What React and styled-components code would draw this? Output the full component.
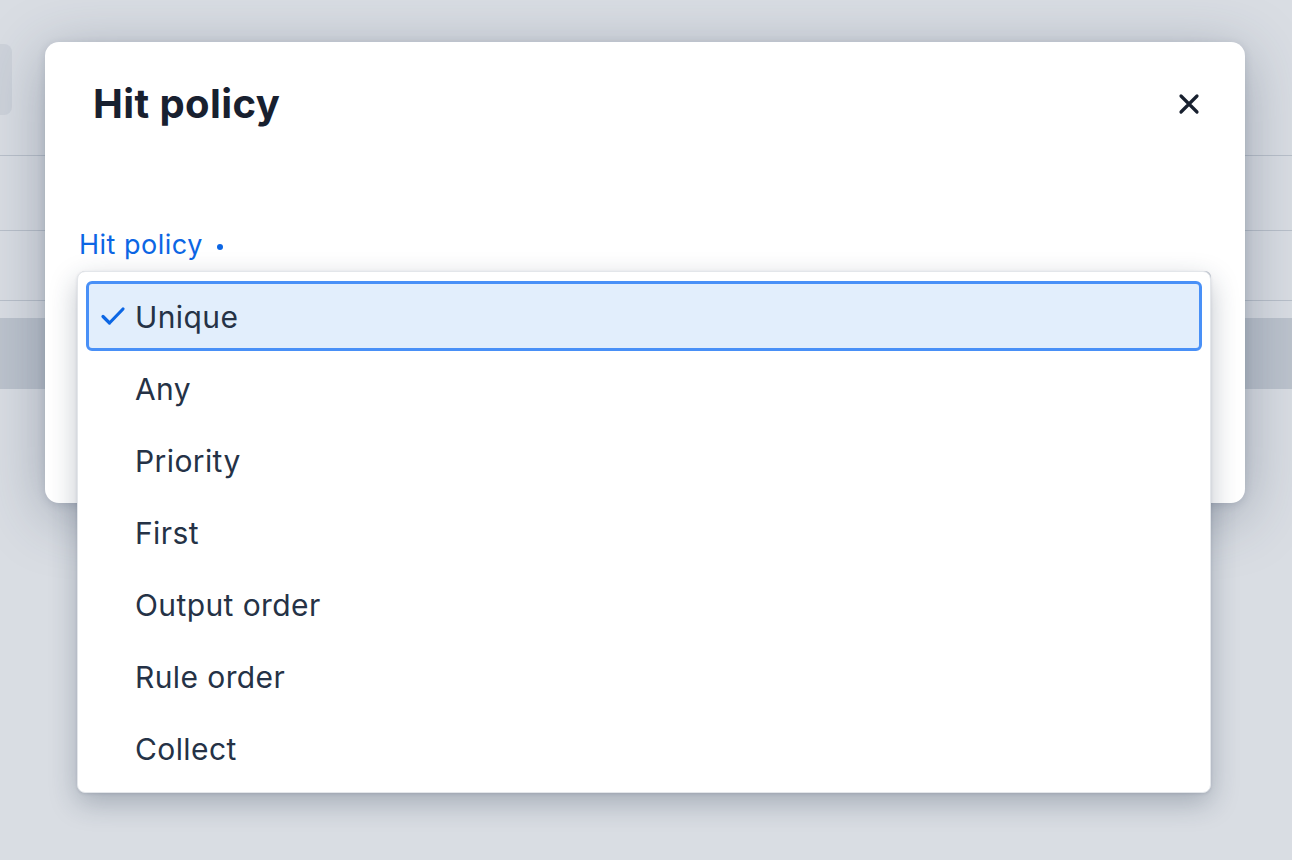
import React from 'react';
import styled, { createGlobalStyle } from 'styled-components';

const GlobalStyle = createGlobalStyle`
  html, body {
    margin: 0;
    padding: 0;
    height: 100%;
  }
  body {
    font-family: 'Inter', 'Noto Sans', sans-serif;
    background: #d9dde3;
    overflow: hidden;
  }
`;

const Page = styled.div`
  position: relative;
  width: 100vw;
  height: 100vh;
  overflow: hidden;
`;

// the app behind the modal, dimmed
const Backdrop = styled.div`
  display: flex;
  flex-direction: column;
  height: 100%;
  background: #d9dde3;
`;

const TopBar = styled.div`
  height: 156px;
  box-sizing: border-box;
  padding-top: 44px;
  border-bottom: 1px solid #b9c0ca;
`;

const GhostButton = styled.div`
  width: 12px;
  height: 71px;
  border-radius: 0 8px 8px 0;
  background: #cdd2da;
`;

const TableRow = styled.div`
  height: ${(p) => p.h}px;
  box-sizing: border-box;
  border-bottom: ${(p) => (p.line ? '1px solid #b9c0ca' : 'none')};
  background: ${(p) => (p.shade ? '#bcc3cd' : 'transparent')};
`;

const Overlay = styled.div`
  position: absolute;
  inset: 0;
  padding: 42px 47px 0 45px;
`;

const Modal = styled.div`
  width: 1200px;
  height: 461px;
  box-sizing: border-box;
  background: #ffffff;
  border-radius: 14px;
  box-shadow: 0 12px 60px rgba(45, 60, 85, 0.35), 0 2px 8px rgba(45, 60, 85, 0.15);
  display: flex;
  flex-direction: column;
`;

const Header = styled.div`
  display: flex;
  align-items: center;
  justify-content: space-between;
  padding: 38px 41px 0 48px;
  height: 48px;
`;

const Title = styled.h2`
  margin: 0;
  font-size: 40px;
  line-height: 48px;
  font-weight: 700;
  color: #18202f;
  letter-spacing: 0.4px;
`;

const CloseButton = styled.button`
  display: flex;
  align-items: center;
  justify-content: center;
  width: 30px;
  height: 30px;
  padding: 0;
  border: 0;
  background: transparent;
  color: #18202f;
`;

const Body = styled.div`
  padding: 101px 34px 0 34px;
`;

const Field = styled.div`
  position: relative;
`;

const Label = styled.div`
  display: flex;
  align-items: center;
  gap: 14px;
  font-size: 27px;
  line-height: 32px;
  letter-spacing: 0.5px;
  color: #0c66e4;
`;

const Dot = styled.span`
  width: 6px;
  height: 6px;
  border-radius: 50%;
  background: #0c66e4;
  margin-top: 4px;
`;

const Trigger = styled.div`
  margin-top: 10px;
  height: 56px;
  border: 2px solid #c5cbd4;
  border-radius: 6px;
`;

const Menu = styled.ul`
  position: absolute;
  top: 42px;
  left: -2px;
  right: 0;
  margin: 0;
  padding: 9px 8px;
  list-style: none;
  background: #ffffff;
  border: 1px solid #e3e6ea;
  border-radius: 8px;
  box-shadow: 0 10px 28px rgba(30, 45, 70, 0.28), 0 1px 3px rgba(30, 45, 70, 0.12);
  display: flex;
  flex-direction: column;
  gap: 2px;
`;

const Item = styled.li`
  position: relative;
  height: 70px;
  box-sizing: border-box;
  display: flex;
  align-items: center;
  padding-left: 46px;
  padding-top: 2px;
  font-size: 30px;
  letter-spacing: 0.4px;
  color: #253246;
  border-radius: 6px;
  border: 3px solid ${(p) => (p.selected ? '#4990f7' : 'transparent')};
  background: ${(p) => (p.selected ? '#e2eefc' : 'transparent')};
`;

const Check = styled.svg`
  position: absolute;
  left: 11px;
  top: 50%;
  transform: translateY(-50%);
`;

const options = ['Unique', 'Any', 'Priority', 'First', 'Output order', 'Rule order', 'Collect'];

const App = () => {
  return (
    <Page>
      <GlobalStyle />
      <Backdrop>
        <TopBar>
          <GhostButton />
        </TopBar>
        <TableRow h={75} line />
        <TableRow h={70} line />
        <TableRow h={17} />
        <TableRow h={71} shade />
      </Backdrop>
      <Overlay>
        <Modal>
          <Header>
            <Title>Hit policy</Title>
            <CloseButton aria-label="Close">
              <svg width="22" height="22" viewBox="0 0 22 22">
                <path d="M3 3 L19 19 M19 3 L3 19" stroke="currentColor" strokeWidth="3.2" strokeLinecap="round" />
              </svg>
            </CloseButton>
          </Header>
          <Body>
            <Field>
              <Label>
                Hit policy <Dot />
              </Label>
              <Trigger />
              <Menu>
                {options.map((o, i) => (
                  <Item key={o} selected={i === 0}>
                    {i === 0 && (
                      <Check width="26" height="22" viewBox="0 0 26 22">
                        <path d="M3 11.5 L9.5 18 L23 4" fill="none" stroke="#0c66e4" strokeWidth="3.2" strokeLinecap="round" strokeLinejoin="round" />
                      </Check>
                    )}
                    {o}
                  </Item>
                ))}
              </Menu>
            </Field>
          </Body>
        </Modal>
      </Overlay>
    </Page>
  );
};

export default App;
